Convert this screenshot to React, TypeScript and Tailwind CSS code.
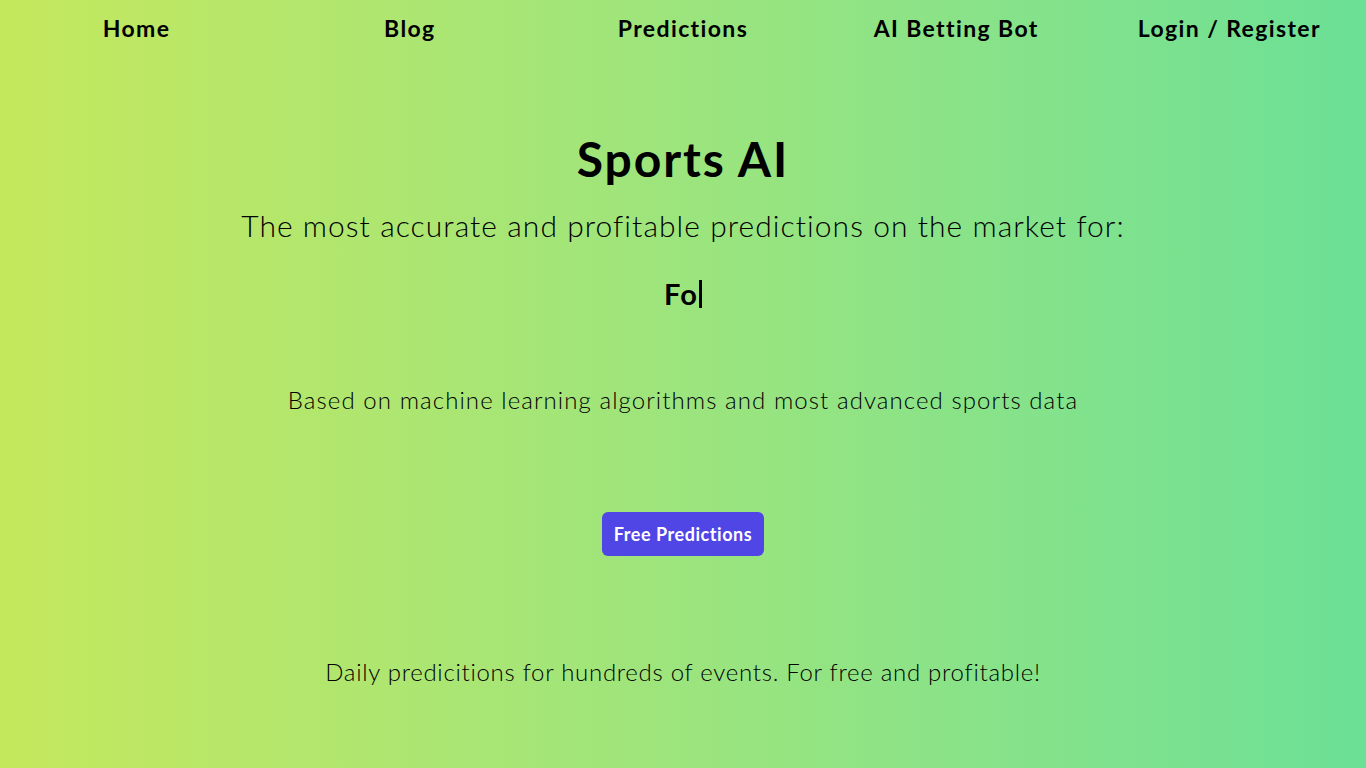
import { useEffect, useState } from "react";

const navLinks = ["Home", "Blog", "Predictions", "AI Betting Bot", "Login / Register"];

const sports = ["Football", "Basketball", "Tennis", "Hockey"];

function useTyped(words: string[]) {
  const [text] = useState("Fo");
  useEffect(() => {
    void words;
  }, [words]);
  return text;
}

export default function App() {
  const typed = useTyped(sports);

  return (
    <div
      className="flex min-h-screen flex-col bg-linear-to-r from-[#c4e85c] to-[#6be096] text-black"
      style={{ fontFamily: "Lato, 'Open Sans', sans-serif" }}
    >
      <nav className="grid grid-cols-5 pt-[13px]">
        {navLinks.map((l) => (
          <a
            key={l}
            href="#"
            className="text-center text-[23px] font-bold leading-[30px] tracking-[0.06em]"
          >
            {l}
          </a>
        ))}
      </nav>

      <main className="flex flex-col items-center text-center">
        <h1 className="mt-[86px] text-[48px] font-bold leading-[60px] tracking-[0.04em]">
          Sports AI
        </h1>
        <p className="mt-[16px] text-[30px] font-light leading-[40px] tracking-[0.035em]">
          The most accurate and profitable predictions on the market for:
        </p>
        <div className="mt-[29px] flex h-[40px] items-center text-[29px] font-bold tracking-[0.04em]">
          {typed}
          <span className="ml-[1px] inline-block h-[28px] w-[3px] bg-black" />
        </div>
        <p className="mt-[70px] text-[24px] font-light leading-[32px] tracking-[0.045em]">
          Based on machine learning algorithms and most advanced sports data
        </p>
        <button
          type="button"
          className="mt-[96px] h-[44px] w-[162px] rounded-md bg-[#4f46e5] text-[18px] font-bold tracking-[0.03em] text-white"
        >
          Free Predictions
        </button>
        <p className="mt-[100px] text-[24px] font-light leading-[32px] tracking-[0.03em]">
          Daily predicitions for hundreds of events. For free and profitable!
        </p>
      </main>
    </div>
  );
}
